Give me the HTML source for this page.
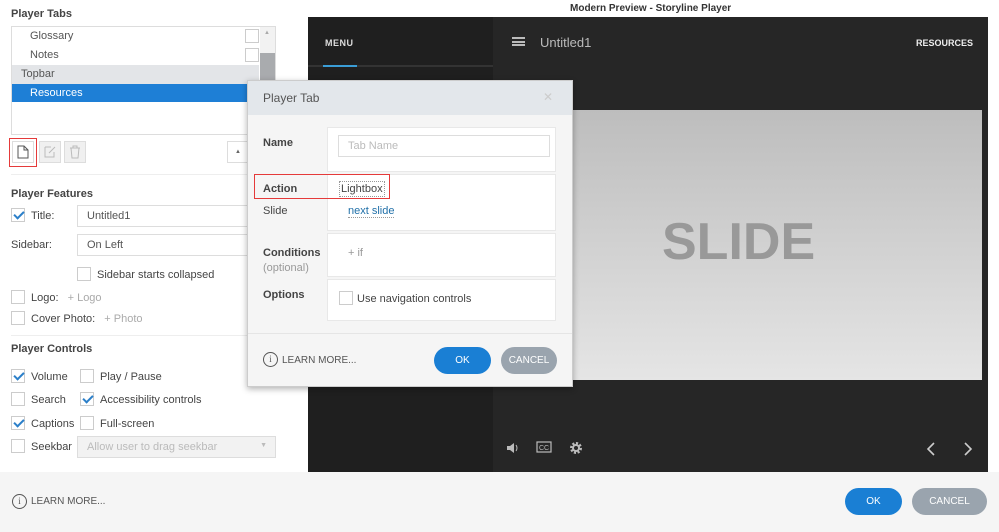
<!DOCTYPE html>
<html><head><meta charset="utf-8"><style>
*{box-sizing:border-box;margin:0;padding:0}
body{width:999px;height:532px;overflow:hidden;background:#fff;font-family:"Liberation Sans",sans-serif;font-size:11px;color:#444;position:relative}
.a{position:absolute}
.cb{position:absolute;width:14px;height:14px;border:1px solid #ccc;background:#fff}
.ck::after{content:"";position:absolute;left:4px;top:0px;width:4px;height:8px;border:solid #2b7fc9;border-width:0 2px 2px 0;transform:rotate(45deg)}
.h{font-weight:bold;color:#444;font-size:11px}
.inp{position:absolute;border:1px solid #ddd;background:#fff;height:22px;padding:4px 9px;color:#555}
.btn{position:absolute;border-radius:14px;color:#fff;text-align:center;font-size:10px;line-height:27px;height:27px}
</style></head><body>
<!-- left panel -->
<div class="a h" style="left:11px;top:8px">Player Tabs</div>
<div class="a" style="left:11px;top:26px;width:265px;height:109px;border:1px solid #ddd"></div>
<div class="a" style="left:30px;top:30px;color:#555">Glossary</div>
<div class="cb" style="left:245px;top:29px"></div>
<div class="a" style="left:30px;top:49px;color:#555">Notes</div>
<div class="cb" style="left:245px;top:48px"></div>
<div class="a" style="left:12px;top:65px;width:247px;height:19px;background:#e3e5e8"></div>
<div class="a" style="left:21px;top:68px;color:#555">Topbar</div>
<div class="a" style="left:12px;top:84px;width:247px;height:18px;background:#1e7fd6"></div>
<div class="a" style="left:30px;top:87px;color:#fff">Resources</div>
<div class="a" style="left:260px;top:27px;width:15px;height:107px;background:#f2f2f2"></div>
<div class="a" style="left:260px;top:53px;width:15px;height:50px;background:#a9abae"></div>
<div class="a" style="left:264px;top:30px;font-size:6px;color:#aaa">▲</div>
<div class="a" style="left:9px;top:138px;width:28px;height:29px;border:1px solid #e53a3a"></div>
<div class="a" style="left:12px;top:141px;width:22px;height:22px;border:1px solid #ddd;background:#fff"></div>
<svg class="a" style="left:17px;top:145px" width="12" height="14"><path d="M1 1h6l4 4v8H1z M7 1v4h4" fill="none" stroke="#555"/></svg>
<div class="a" style="left:39px;top:141px;width:22px;height:22px;border:1px solid #ddd;background:#f0f0f0"></div>
<svg class="a" style="left:44px;top:145px" width="13" height="13"><path d="M1 2h6M1 2v10h9V7M5 8l6-6" fill="none" stroke="#bbb"/></svg>
<div class="a" style="left:64px;top:141px;width:22px;height:22px;border:1px solid #ddd;background:#f0f0f0"></div>
<svg class="a" style="left:69px;top:145px" width="12" height="14"><path d="M1 3h10M4 3V1h4v2M2 3l1 10h6l1-10" fill="none" stroke="#bbb"/></svg>
<div class="a" style="left:227px;top:141px;width:22px;height:22px;border:1px solid #ddd;background:#fff;font-size:6px;text-align:center;line-height:20px;color:#666">▲</div>
<div class="a" style="left:11px;top:174px;width:297px;border-top:1px solid #eee"></div>
<div class="a h" style="left:11px;top:188px">Player Features</div>
<div class="cb ck" style="left:11px;top:208px"></div>
<div class="a" style="left:31px;top:210px">Title:</div>
<div class="inp" style="left:77px;top:205px;width:175px">Untitled1</div>
<div class="a" style="left:11px;top:239px">Sidebar:</div>
<div class="inp" style="left:77px;top:234px;width:175px">On Left</div>
<div class="cb" style="left:77px;top:267px"></div>
<div class="a" style="left:97px;top:269px">Sidebar starts collapsed</div>
<div class="cb" style="left:11px;top:290px"></div>
<div class="a" style="left:31px;top:292px">Logo: <span style="color:#aaa;margin-left:6px">+ Logo</span></div>
<div class="cb" style="left:11px;top:311px"></div>
<div class="a" style="left:31px;top:313px">Cover Photo: <span style="color:#aaa;margin-left:6px">+ Photo</span></div>
<div class="a" style="left:11px;top:335px;width:297px;border-top:1px solid #eee"></div>
<div class="a h" style="left:11px;top:343px">Player Controls</div>
<div class="cb ck" style="left:11px;top:369px"></div><div class="a" style="left:31px;top:371px">Volume</div>
<div class="cb" style="left:80px;top:369px"></div><div class="a" style="left:100px;top:371px">Play / Pause</div>
<div class="cb" style="left:11px;top:392px"></div><div class="a" style="left:31px;top:394px">Search</div>
<div class="cb ck" style="left:80px;top:392px"></div><div class="a" style="left:100px;top:394px">Accessibility controls</div>
<div class="cb ck" style="left:11px;top:416px"></div><div class="a" style="left:31px;top:418px">Captions</div>
<div class="cb" style="left:80px;top:416px"></div><div class="a" style="left:100px;top:418px">Full-screen</div>
<div class="cb" style="left:11px;top:439px"></div><div class="a" style="left:31px;top:441px">Seekbar</div>
<div class="inp" style="left:77px;top:436px;width:199px;background:#f2f2f2;color:#bbb">Allow user to drag seekbar<span style="position:absolute;right:8px;top:5px;font-size:7px">▼</span></div>
<!-- preview -->
<div class="a" style="left:570px;top:3px;font-size:10px;font-weight:bold;color:#333">Modern Preview - Storyline Player</div>
<div class="a" style="left:308px;top:17px;width:680px;height:455px;background:#262626"></div>
<div class="a" style="left:308px;top:17px;width:185px;height:455px;background:#1f1f1f"></div>
<div class="a" style="left:308px;top:65px;width:185px;height:2px;background:#333"></div>
<div class="a" style="left:323px;top:65px;width:34px;height:2px;background:#3a9dd6"></div>
<div class="a" style="left:325px;top:38px;color:#ddd;font-weight:bold;font-size:9px;letter-spacing:.5px">MENU</div>
<div class="a" style="left:512px;top:37px;width:13px;height:9px;border-top:2px solid #bbb;border-bottom:2px solid #bbb"></div>
<div class="a" style="left:512px;top:41px;width:13px;height:2px;background:#bbb"></div>
<div class="a" style="left:540px;top:35px;color:#bbb;font-size:13px">Untitled1</div>
<div class="a" style="left:916px;top:38px;color:#eee;font-weight:bold;font-size:9px">RESOURCES</div>
<div class="a" style="left:493px;top:110px;width:489px;height:270px;background:linear-gradient(#bdbdbd,#e5e5e5)"></div>
<div class="a" style="left:662px;top:212px;font-size:52px;font-weight:bold;color:#999">SLIDE</div>
<svg class="a" style="left:505px;top:440px" width="90" height="16"><path d="M2 6h3l4-3v10l-4-3H2z" fill="#bbb"/><path d="M11 5q2 3 0 6" stroke="#bbb" fill="none"/><rect x="32" y="2" width="14" height="10" fill="none" stroke="#bbb" stroke-width="1.2"/><text x="34" y="10" font-size="7" fill="#bbb" font-family="Liberation Sans">CC</text><circle cx="71" cy="8" r="4.5" fill="none" stroke="#bbb" stroke-width="3" stroke-dasharray="2 1.5"/><circle cx="71" cy="8" r="3" fill="none" stroke="#bbb" stroke-width="2"/></svg>
<svg class="a" style="left:925px;top:441px" width="50" height="16"><path d="M9 2L3 8l6 6M40 2l6 6-6 6" stroke="#ccc" stroke-width="1.6" fill="none"/></svg>
<!-- bottom bar -->
<div class="a" style="left:0;top:472px;width:999px;height:60px;background:#f5f5f5"></div>
<div class="a" style="left:12px;top:494px;width:15px;height:15px;border:1.5px solid #555;border-radius:50%;font-size:9px;text-align:center;line-height:12px;color:#555;font-family:'Liberation Serif'">i</div>
<div class="a" style="left:31px;top:496px;font-size:10px;color:#555">LEARN MORE...</div>
<div class="btn" style="left:845px;top:488px;width:57px;background:#1a7fd4">OK</div>
<div class="btn" style="left:912px;top:488px;width:75px;background:#9aa4ae">CANCEL</div>
<!-- dialog -->
<div class="a" style="left:247px;top:80px;width:326px;height:307px;background:#f5f5f5;border:1px solid #ccc;box-shadow:0 2px 6px rgba(0,0,0,.3)"></div>
<div class="a" style="left:248px;top:81px;width:324px;height:34px;background:#e3e7eb"></div>
<div class="a" style="left:263px;top:91px;font-size:12px;color:#555">Player Tab</div>
<div class="a" style="left:543px;top:90px;font-size:12px;color:#ccc">✕</div>
<div class="a" style="left:327px;top:127px;width:229px;height:45px;background:#fff;border:1px solid #e8e8e8"></div>
<div class="a" style="left:327px;top:174px;width:229px;height:57px;background:#fff;border:1px solid #e8e8e8"></div>
<div class="a" style="left:327px;top:233px;width:229px;height:44px;background:#fff;border:1px solid #e8e8e8"></div>
<div class="a" style="left:327px;top:279px;width:229px;height:42px;background:#fff;border:1px solid #e8e8e8"></div>
<div class="a h" style="left:263px;top:137px">Name</div>
<div class="inp" style="left:338px;top:135px;width:212px;color:#bbb">Tab Name</div>
<div class="a" style="left:254px;top:174px;width:136px;height:25px;border:1px solid #e53a3a"></div>
<div class="a h" style="left:263px;top:183px">Action</div>
<div class="a" style="left:339px;top:181px;border:1px dotted #999;padding:1px;color:#444">Lightbox</div>
<div class="a" style="left:263px;top:205px">Slide</div>
<div class="a" style="left:348px;top:205px;color:#1f6fa8;border-bottom:1px dotted #999">next slide</div>
<div class="a h" style="left:263px;top:247px">Conditions</div>
<div class="a" style="left:263px;top:262px;color:#999">(optional)</div>
<div class="a" style="left:348px;top:247px;color:#999">+ if</div>
<div class="a h" style="left:263px;top:289px">Options</div>
<div class="cb" style="left:339px;top:291px"></div>
<div class="a" style="left:357px;top:293px">Use navigation controls</div>
<div class="a" style="left:248px;top:333px;width:324px;border-top:1px solid #e5e5e5"></div>
<div class="a" style="left:263px;top:352px;width:15px;height:15px;border:1.5px solid #555;border-radius:50%;font-size:9px;text-align:center;line-height:12px;color:#555;font-family:'Liberation Serif'">i</div>
<div class="a" style="left:282px;top:355px;font-size:10px;color:#555">LEARN MORE...</div>
<div class="btn" style="left:434px;top:347px;width:57px;background:#1a7fd4">OK</div>
<div class="btn" style="left:501px;top:347px;width:56px;background:#9aa4ae">CANCEL</div>
</body></html>
